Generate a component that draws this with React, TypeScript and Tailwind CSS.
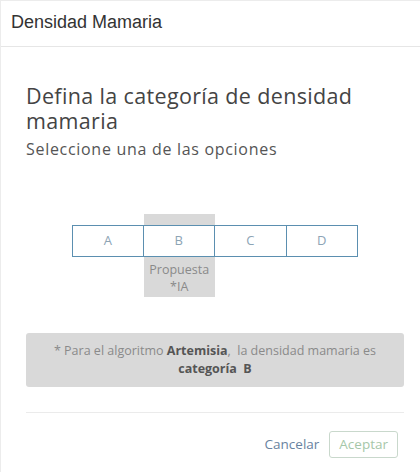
export default function App() {
  const options = ["A", "B", "C", "D"];
  const proposed = "B";

  return (
    <div className="h-[472px] w-[420px] overflow-hidden bg-white">
      <div className="h-full border-l border-t border-[#ececec]">
        <div className="flex h-[46px] items-center border-b border-[#e6e6e6] px-[10px] pb-[2px] font-['Liberation_Sans',Arial,sans-serif] text-[18px] text-[#333]">
          Densidad Mamaria
        </div>

        <div className="pl-[25px] pr-[16px] pt-[36px] font-['Open_Sans',sans-serif]">
          <h2 className="text-[21.5px] leading-[25px] tracking-[0.35px] text-[#444]">
            Defina la categoría de densidad mamaria
          </h2>
          <p className="mt-[6px] text-[16px] leading-[20px] tracking-[0.7px] text-[#555]">
            Seleccione una de las opciones
          </p>

          <div className="mt-[55px] flex justify-center">
            <div className="flex">
              {options.map((o, i) => (
                <div key={o} className="flex w-[71.5px] flex-col items-center">
                  <div className={`h-[11px] w-full ${o === proposed ? "bg-[#d9d9d9]" : ""}`} />
                  <div
                    className={`flex h-[32px] w-full items-center justify-center border-y border-r border-[#5b8fb0] bg-white text-[13px] text-[#8da4b5] ${i === 0 ? "border-l" : ""}`}
                  >
                    {o}
                  </div>
                  {o === proposed && (
                    <div className="w-full bg-[#d9d9d9] pb-[2px] pt-[4px] text-center text-[12.5px] leading-[17px] text-[#8a8a8a]">
                      Propuesta
                      <br />
                      *IA
                    </div>
                  )}
                </div>
              ))}
            </div>
          </div>

          <div className="mt-[36px] rounded-[3px] bg-[#d9d9d9] px-3 py-[9px] text-center text-[12.5px] leading-[18px] text-[#8a8a8a]">
            * Para el algoritmo <b className="font-bold text-[#555]">Artemisia</b>,&nbsp; la densidad mamaria es
            <br />
            <b className="font-bold text-[#555]">categoría&nbsp; B</b>
          </div>

          <div className="mt-[25px] border-t border-[#ebebeb]" />

          <div className="mt-[18px] flex items-center justify-end gap-[10px] pr-[6px]">
            <button className="text-[13.5px] text-[#6883a0]">Cancelar</button>
            <button className="h-[27px] rounded-[3px] border border-[#c9d8cc] px-[9px] text-[13.5px] text-[#a6c7a9]">
              Aceptar
            </button>
          </div>
        </div>
      </div>
    </div>
  );
}
